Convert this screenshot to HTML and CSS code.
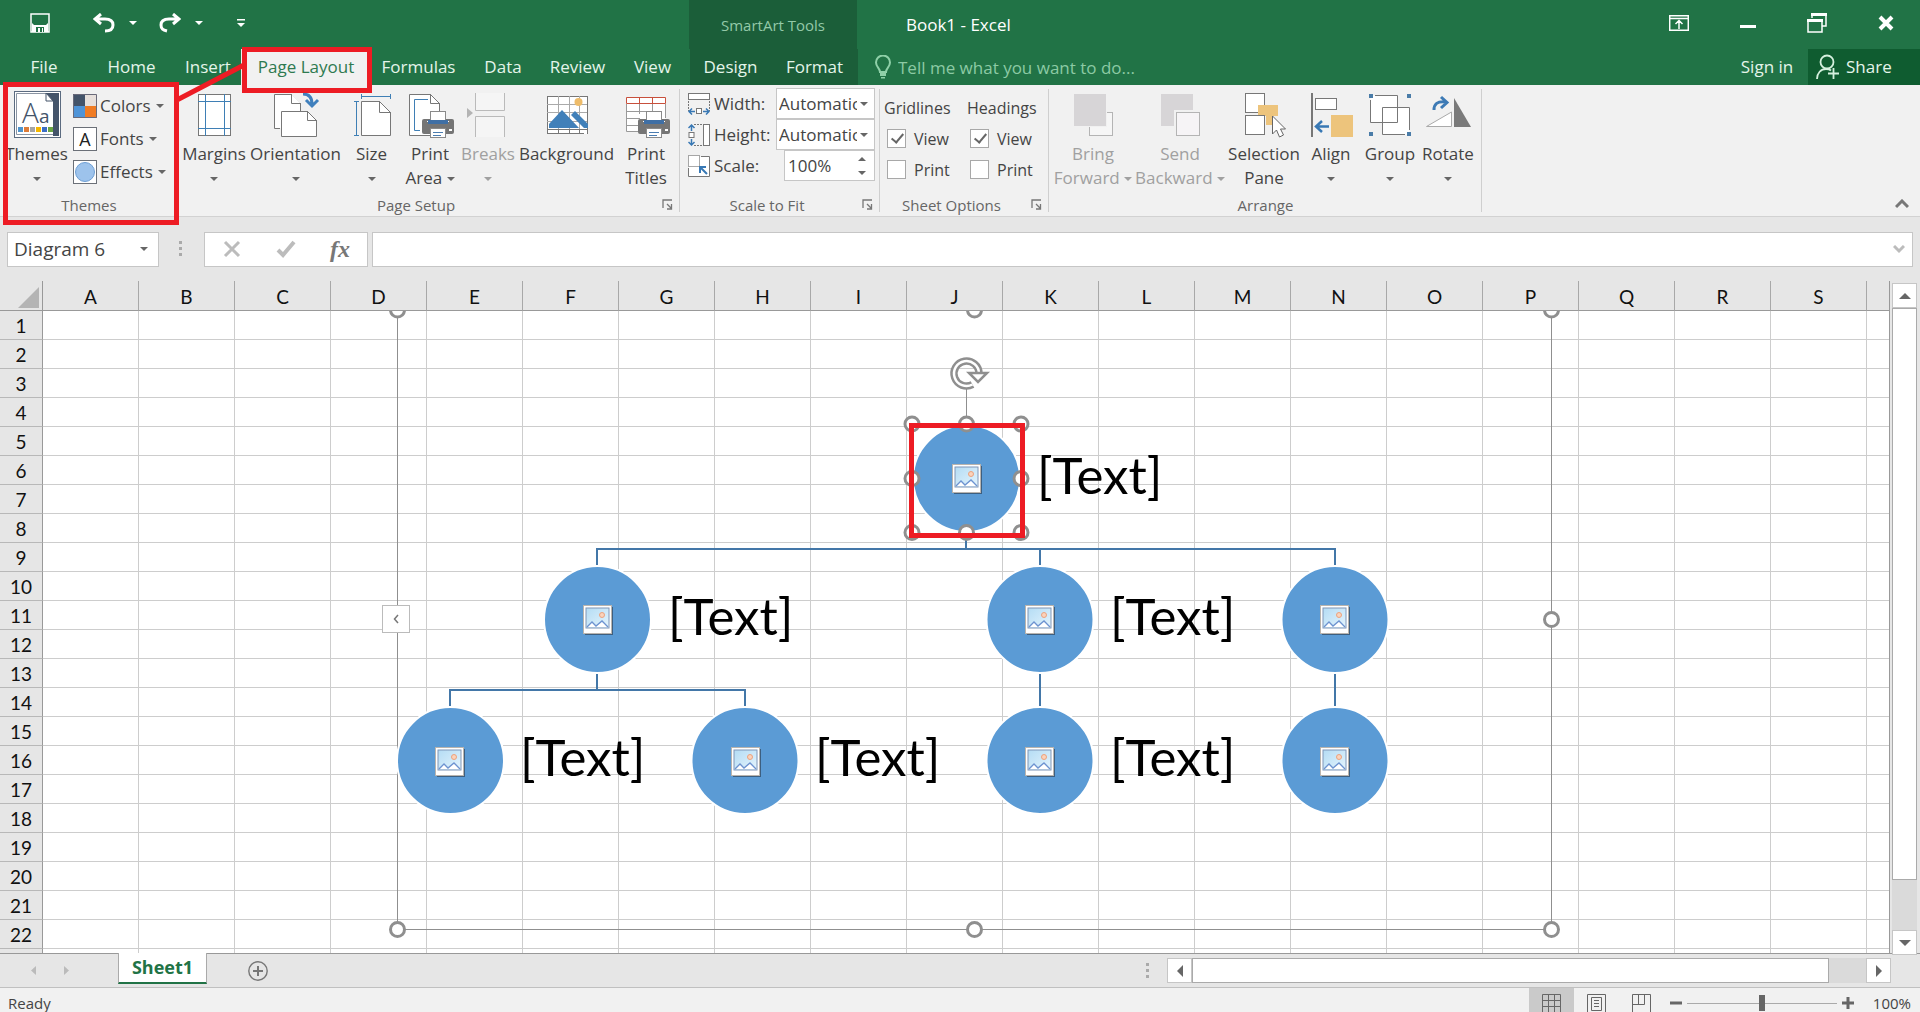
FILE: index.html
```html
<!DOCTYPE html>
<html lang="en">
<head>
<meta charset="utf-8">
<title>Book1 - Excel</title>
<link rel="stylesheet" href="styles.css">
</head>
<body>
<svg class="defs" aria-hidden="true">
  <defs>
    <linearGradient id="sky" x1="0" y1="0" x2="1" y2="1"><stop offset="0" stop-color="#b4dcf4"/><stop offset="1" stop-color="#e4f4fd"/></linearGradient>
    <symbol id="picture" viewBox="0 0 30 30">
      <rect x="2" y="2" width="28" height="28" fill="#3d5f80"/>
      <rect x="0.5" y="0.5" width="28" height="28" fill="#fff" stroke="#b9b4ae"/>
      <rect x="3" y="3" width="23" height="20" fill="url(#sky)" stroke="#7f96b8"/>
      <circle cx="19" cy="10" r="2.500" fill="#fbd3bb" stroke="#eba27e"/>
      <path d="M4 22l5-5 4 4 6-5 6 6z" fill="#fff"/>
      <path d="M4 22l5-5 4 4 6-5 6 6" fill="none" stroke="#6d93d0" stroke-width="1.300"/>
    </symbol>
    <symbol id="printer" viewBox="0 0 32 27">
      <rect x="0" y="8" width="32" height="15" rx="2" fill="#757575"/>
      <rect x="8.500" y="0.5" width="15" height="11" fill="#fff" stroke="#8a8a8a"/>
      <path d="M5 10.500h22" stroke="#fff"/>
      <rect x="6" y="9" width="20" height="4" fill="#3f6fa5"/>
      <rect x="8.500" y="17.500" width="15" height="9" fill="#fff" stroke="#8a8a8a"/>
      <path d="M11 21.500h10M11 24.500h8" stroke="#4a7cb0"/>
      <rect x="27" y="18" width="3" height="2" fill="#fff"/>
    </symbol>
    <symbol id="launcher" viewBox="0 0 11 11">
      <path d="M1 9V1h9M5 5l4 4M9.500 5v5H5" fill="none" stroke="#777" stroke-width="1.300"/>
    </symbol>
    <symbol id="caret" viewBox="0 0 8 4"><path d="M0 0h8L4 4z" fill="currentColor"/></symbol>
  </defs>
</svg>

<header class="titlebar">
  <div class="quick">
    <button class="bare save" aria-label="Save"><svg width="20" height="20" viewBox="0 0 20 20"><path d="M1 1h18v18H1z" fill="none" stroke="#fff" stroke-width="1.500"/><path d="M2 10l2 2h12l2-2v9H2z" fill="#fff"/><path d="M6 14h8v5H6z" fill="#217346"/><path d="M8 15h2v4H8zM12 15h1v4h-1z" fill="#fff"/></svg></button>
    <button class="bare undo" aria-label="Undo"><svg width="22" height="20" viewBox="0 0 22 20"><path d="M8 1L2 6l6 5M2 6h10c5 0 8 2 8 6s-3 6-8 6" fill="none" stroke="#fff" stroke-width="3"/></svg></button>
    <button class="bare drop" aria-label="Undo list"><svg width="8" height="4"><use href="#caret"/></svg></button>
    <button class="bare redo" aria-label="Redo"><svg width="22" height="20" viewBox="0 0 22 20"><path d="M14 1l6 5-6 5M20 6H10c-5 0-8 2-8 6s2 5 6 6" fill="none" stroke="#fff" stroke-width="3"/></svg></button>
    <button class="bare drop" aria-label="Redo list"><svg width="8" height="4"><use href="#caret"/></svg></button>
    <button class="bare custom" aria-label="Customize toolbar"><svg width="8" height="8" viewBox="0 0 8 8"><path d="M0 0h8v1.500H0zM0 4h8L4 8z" fill="#fff"/></svg></button>
  </div>
  <div class="context-title">SmartArt Tools</div>
  <div class="doc-title">Book1 - Excel</div>
  <div class="window-buttons">
    <button class="bare" aria-label="Ribbon display options"><svg width="20" height="16" viewBox="0 0 20 16"><path d="M.7.7h18.600v14.600H.7zM1 3.500h18M10 14V6M6.500 9L10 5.500 13.500 9" fill="none" stroke="#fff" stroke-width="1.500"/></svg></button>
    <button class="bare" aria-label="Minimize"><svg width="16" height="16" viewBox="0 0 16 16"><path d="M0 10h16v3H0z" fill="#fff"/></svg></button>
    <button class="bare" aria-label="Restore"><svg width="20" height="20" viewBox="0 0 20 20"><path d="M5 5V1.500h14V13h-4" fill="none" stroke="#fff" stroke-width="1.500"/><path d="M4 0h16v3H4zM0 6h16v3H0z" fill="#fff"/><path d="M1 7h14v12H1z" fill="none" stroke="#fff" stroke-width="1.500"/></svg></button>
    <button class="bare" aria-label="Close"><svg width="16" height="16" viewBox="0 0 16 16"><path d="M2 2l12 12M14 2L2 14" stroke="#fff" stroke-width="4"/></svg></button>
  </div>
</header>

<nav class="tabs">
  <button class="tab w-file">File</button>
  <button class="tab w-home">Home</button>
  <button class="tab w-insert">Insert</button>
  <button class="tab w-layout active">Page Layout</button>
  <button class="tab w-formulas">Formulas</button>
  <button class="tab w-data">Data</button>
  <button class="tab w-data">Review</button>
  <button class="tab w-data">View</button>
  <button class="tab w-design context">Design</button>
  <button class="tab w-home context">Format</button>
  <label class="tell-me">
    <svg width="16" height="24" viewBox="0 0 16 24"><path d="M5 17c0-4-4-5-4-9.500a7 7 0 0 1 14 0C15 12 11 13 11 17z" fill="none" stroke="#8fd0a8" stroke-width="2"/><path d="M5 18h6v3H5zM6 22h4v1.500H6z" fill="#8fd0a8"/></svg>
    <input type="text" placeholder="Tell me what you want to do..." aria-label="Tell me what you want to do">
  </label>
  <button class="tab sign-in">Sign in</button>
  <button class="share"><svg width="24" height="26" viewBox="0 0 24 26"><circle cx="11" cy="8" r="6.500" fill="none" stroke="#d5f0de" stroke-width="1.800"/><path d="M1 25c0-6 4-10 9-10 2 0 4 .5 5 1.500M17.500 14v11M12 19.500h11" fill="none" stroke="#d5f0de" stroke-width="1.800"/></svg>Share</button>
</nav>

<section class="ribbon">
  <div class="group g-themes">
    <div class="group-body">
      <button class="big b-themes">
        <svg class="icon" viewBox="0 0 48 47"><rect x="1.500" y=".5" width="46" height="46" fill="#fff" stroke="#5b6b80"/><path d="M3.500 2.500h30l7 7v34h-37z" fill="#fff" stroke="#8b95a3"/><path d="M33 2h13v43h-6V10z" fill="#44546a"/><path d="M33 2v8h7z" fill="#fff" stroke="#44546a"/><text x="9" y="32" font-size="28" fill="#44546a" class="light">A</text><text x="26" y="32" font-size="19" fill="#44546a">a</text><path d="M5 36h5v5H5z" fill="#4f94cd"/><path d="M11 36h5v5h-5z" fill="#dd7c38"/><path d="M17 36h5v5h-5z" fill="#a5a5a5"/><path d="M23 36h5v5h-5z" fill="#f5b800"/><path d="M29 36h5v5h-5z" fill="#3c6ec4"/><path d="M35 36h5v5h-5z" fill="#6aa544"/></svg>
        <span>Themes</span><span><svg class="caret"><use href="#caret"/></svg></span>
      </button>
      <div class="stack">
        <button class="small"><svg width="24" height="24" viewBox="0 0 24 24"><path d="M0 0h12v12H0z" fill="#44546a"/><path d="M12 0h12v12H12z" fill="#e7e0dc"/><path d="M0 12h12v12H0z" fill="#4f94d8"/><path d="M12 12h12v12H12z" fill="#f07c24"/><path d="M.5.5h23v23H.5z" fill="none" stroke="#6a6a7a"/></svg>Colors<svg class="caret"><use href="#caret"/></svg></button>
        <button class="small"><svg width="24" height="24" viewBox="0 0 24 24"><rect x=".5" y=".5" width="23" height="23" fill="#fff" stroke="#6b7078"/><text x="12" y="19" font-size="18" text-anchor="middle" fill="#222">A</text></svg>Fonts<svg class="caret"><use href="#caret"/></svg></button>
        <button class="small"><svg width="24" height="24" viewBox="0 0 24 24"><rect x=".5" y=".5" width="23" height="23" fill="#fff" stroke="#6b7078"/><circle cx="12" cy="12" r="9.500" fill="#9dc3ec" stroke="#6e9fd4"/></svg>Effects<svg class="caret"><use href="#caret"/></svg></button>
      </div>
    </div>
    <div class="group-foot"><span>Themes</span></div>
  </div>

  <div class="group g-setup">
    <div class="group-body">
      <button class="big b-margins">
        <svg class="icon" viewBox="0 0 48 47"><rect x="8.500" y="3.500" width="32" height="41" fill="#fff" stroke="#777"/><path d="M15.500 3v42M34.500 3v42M8 10.500h33M8 37.500h33" stroke="#3f7fb5" fill="none"/></svg>
        <span>Margins</span><span><svg class="caret"><use href="#caret"/></svg></span>
      </button>
      <button class="big b-orient">
        <svg class="icon" viewBox="0 0 48 47"><path d="M8 37.500H2.500v-34h17l9 9V20" fill="#fff" stroke="#777"/><path d="M19.500 3v9.500H29M9.500 20.500h26l9 9v16h-35z" fill="#fff" stroke="#777"/><path d="M35.500 20v9.500H45" fill="none" stroke="#777"/><path d="M31 3c6 0 9 3 9 10M34 9l6 6 6-6" fill="none" stroke="#4080bd" stroke-width="3"/></svg>
        <span>Orientation</span><span><svg class="caret"><use href="#caret"/></svg></span>
      </button>
      <button class="big b-size">
        <svg class="icon" viewBox="0 0 48 47"><path d="M13.500 10.500h18l11 11v23h-29z" fill="#fff" stroke="#777"/><path d="M31.500 10v11.500H43" fill="none" stroke="#777"/><path d="M13.500 3v5M42.500 3v5M13 5.500h30M6 10.500h5M6 44.500h5M8.500 10v35" fill="none" stroke="#3f7fb5"/></svg>
        <span>Size</span><span><svg class="caret"><use href="#caret"/></svg></span>
      </button>
      <button class="big b-area">
        <svg class="icon" viewBox="0 0 48 47"><path d="M3.500 3.500h21l9 9v32h-30z" fill="#fff" stroke="#777"/><path d="M24.500 3v9.500H34" fill="none" stroke="#777"/><path d="M22 8.500H8.500v31H14" fill="none" stroke="#3f7fb5"/><use href="#printer" x="16" y="20" width="32" height="27"/></svg>
        <span>Print</span><span>Area <svg class="caret"><use href="#caret"/></svg></span>
      </button>
      <button class="big b-breaks" disabled>
        <svg class="icon" viewBox="0 0 48 47"><path d="M3 17l6 5-6 5z" fill="#b4b4b4"/><path d="M11.500 2v17.500h29V2M11.500 46V25.500h29V46" fill="#f5f5f5" stroke="#bababa"/></svg>
        <span>Breaks</span><span><svg class="caret"><use href="#caret"/></svg></span>
      </button>
      <button class="big b-back">
        <svg class="icon" viewBox="0 0 48 47"><rect x="4.500" y="5.500" width="40" height="37" fill="#fff" stroke="#777"/><path d="M15.500 5v37M26.500 5v37M36.500 5v37M4 13.500h40M4 21.500h40M4 30.500h40" stroke="#aaa"/><circle cx="35.500" cy="11" r="4" fill="#eebc6a"/><path d="M6 37v-4l13-14 17 18zM28 24l4-4 13 13v4h-4z" fill="#4180b9"/><path d="M5 38h39v5H5z" fill="#fff"/><path d="M4 38.500h41M4 42.500h37M15.500 38v4M26.500 38v4M36.500 38v4" stroke="#777"/></svg>
        <span>Background</span>
      </button>
      <button class="big b-titles">
        <svg class="icon" viewBox="0 0 48 47"><rect x="4.500" y="6.500" width="39" height="34" fill="#fff"/><path d="M4.500 13v27.500H16M17.500 13v10M30.500 13v10M4 20.500h20M4 27.500h14M43.500 13v14M4 34.500h12" fill="none" stroke="#999"/><path d="M4.500 6.500h39v6h-39zM17.500 6v6M30.500 6v6" fill="none" stroke="#c8503c"/><use href="#printer" x="16" y="20" width="32" height="27"/></svg>
        <span>Print</span><span>Titles</span>
      </button>
    </div>
    <div class="group-foot"><span>Page Setup</span><button class="bare launch" aria-label="Page Setup options"><svg width="11" height="11"><use href="#launcher"/></svg></button></div>
  </div>

  <div class="group g-scale">
    <div class="group-body fields">
      <div class="field">
        <svg width="22" height="22" viewBox="0 0 22 22"><rect x=".5" y=".5" width="21" height="6" fill="#fff" stroke="#777"/><path d="M.5 8v10M21.500 8v10" stroke="#777" stroke-dasharray="2 1"/><rect x="8.500" y="15.500" width="5" height="5" fill="#fff" stroke="#777"/><path d="M1 18.500h6M4 15.500l-3 3 3 3M21 18.500h-6M18 15.500l3 3-3 3" fill="none" stroke="#3878b4" stroke-width="1.500"/></svg>
        <label for="width">Width:</label>
        <div class="select"><select id="width"><option>Automatic</option></select><svg class="caret"><use href="#caret"/></svg></div>
      </div>
      <div class="field">
        <svg width="22" height="22" viewBox="0 0 22 22"><rect x="15.500" y=".5" width="6" height="21" fill="#fff" stroke="#777"/><path d="M6 .5h8M6 21.500h8" stroke="#777" stroke-dasharray="2 1"/><rect x="1" y="8.500" width="5" height="5" fill="#fff" stroke="#777"/><path d="M3.500 1v6M.5 4l3-3 3 3M3.500 21v-6M.5 18l3 3 3-3" fill="none" stroke="#3878b4" stroke-width="1.500"/></svg>
        <label for="height">Height:</label>
        <div class="select"><select id="height"><option>Automatic</option></select><svg class="caret"><use href="#caret"/></svg></div>
      </div>
      <div class="field">
        <svg width="22" height="22" viewBox="0 0 22 22"><path d="M13 1.500h8.500v20H.5V13" fill="#fff" stroke="#777"/><rect x=".5" y=".5" width="11" height="11" fill="#fff" stroke="#555" stroke-dasharray="1 1"/><path d="M12 18v-6h6M12 12l7 7" fill="none" stroke="#3878b4" stroke-width="2"/></svg>
        <label for="scale">Scale:</label>
        <div class="spin"><input id="scale" type="text" value="100%"><svg width="8" height="18" viewBox="0 0 8 18"><path d="M0 4h8L4 0zM0 14h8l-4 4z" fill="#666"/></svg></div>
      </div>
    </div>
    <div class="group-foot"><span>Scale to Fit</span><button class="bare launch" aria-label="Scale to Fit options"><svg width="11" height="11"><use href="#launcher"/></svg></button></div>
  </div>

  <div class="group g-sheet">
    <div class="group-body">
      <fieldset class="checks c-grid"><legend>Gridlines</legend>
        <label><input type="checkbox" checked>View</label>
        <label><input type="checkbox">Print</label>
      </fieldset>
      <fieldset class="checks"><legend>Headings</legend>
        <label><input type="checkbox" checked>View</label>
        <label><input type="checkbox">Print</label>
      </fieldset>
    </div>
    <div class="group-foot"><span>Sheet Options</span><button class="bare launch" aria-label="Sheet options"><svg width="11" height="11"><use href="#launcher"/></svg></button></div>
  </div>

  <div class="group g-arrange">
    <div class="group-body">
      <button class="big b-forward" disabled>
        <svg class="icon" viewBox="0 0 48 47"><rect x="20.500" y="21.500" width="23" height="23" fill="#f6f6f6" stroke="#b4b4b4"/><path d="M4 2h34v34H4z" fill="#f1f1f1"/><path d="M5 3h32v32H5z" fill="#d7d5d7"/></svg>
        <span>Bring</span><span>Forward <svg class="caret"><use href="#caret"/></svg></span>
      </button>
      <button class="big b-backward" disabled>
        <svg class="icon" viewBox="0 0 48 47"><path d="M5 3h32v32H5z" fill="#d7d5d7"/><path d="M18 19h28v28H18z" fill="#f1f1f1"/><rect x="20.500" y="21.500" width="23" height="23" fill="#f6f4f6" stroke="#b4b4b4"/></svg>
        <span>Send</span><span>Backward <svg class="caret"><use href="#caret"/></svg></span>
      </button>
      <button class="big b-pane">
        <svg class="icon" viewBox="0 0 48 47"><rect x="5.500" y="2.500" width="19" height="19" fill="#fff" stroke="#777"/><path d="M18 14h20v11h-6v9h-6v-9h-8z" fill="#edc47c"/><rect x="5.500" y="24.500" width="19" height="19" fill="#fff" stroke="#777"/><path d="M32.500 25v18l4-4 3 7 4-2-3-6h5z" fill="#fff" stroke="#666"/></svg>
        <span>Selection</span><span>Pane</span>
      </button>
      <button class="big b-align">
        <svg class="icon" viewBox="0 0 48 47"><path d="M5 2v44" stroke="#777" stroke-width="2"/><rect x="8.500" y="7.500" width="21" height="11" fill="#fff" stroke="#777"/><path d="M24 24h22v22H24z" fill="#edc47c"/><path d="M22 35.500H10M15 30l-6 5.500 6 5.500" fill="none" stroke="#3878b4" stroke-width="2.500"/></svg>
        <span>Align</span><span><svg class="caret"><use href="#caret"/></svg></span>
      </button>
      <button class="big b-group">
        <svg class="icon" viewBox="0 0 48 47"><path d="M4.500 4.500h27v27h-27zM16.500 16.500h27v27h-27z" fill="#fff"/><path d="M9 4.500h22.500v27h-27V9M16.500 16.500h27V39M39 43.500H16.500v-27" fill="none" stroke="#777"/><path d="M3 3h4v4H3zM41 3h4v4h-4zM3 41h4v4H3zM41 41h4v4h-4z" fill="#4a7ca8"/></svg>
        <span>Group</span><span><svg class="caret"><use href="#caret"/></svg></span>
      </button>
      <button class="big b-rotate">
        <svg class="icon" viewBox="0 0 48 47"><path d="M2.500 35.500h25V21z" fill="#fff" stroke="#aaa"/><path d="M30 7v29h17z" fill="#7a7a7a"/><path d="M10 19c0-6 3-9 12-8M17 6l6 5.500-6 5.500" fill="none" stroke="#3d7ab5" stroke-width="3"/></svg>
        <span>Rotate</span><span><svg class="caret"><use href="#caret"/></svg></span>
      </button>
    </div>
    <div class="group-foot"><span>Arrange</span></div>
  </div>
  <button class="bare collapse" aria-label="Collapse the ribbon"><svg width="14" height="10" viewBox="0 0 14 10"><path d="M1 8l6-6 6 6" fill="none" stroke="#777" stroke-width="3"/></svg></button>
</section>

<section class="formula-row">
  <div class="name-box"><input type="text" value="Diagram 6" aria-label="Name box"><svg class="caret"><use href="#caret"/></svg></div>
  <svg class="grip" width="3" height="16" viewBox="0 0 3 16"><path d="M0 0h3v3H0zM0 6h3v3H0zM0 12h3v3H0z" fill="#aaa"/></svg>
  <div class="fx-box">
    <button class="bare" aria-label="Cancel"><svg width="18" height="18" viewBox="0 0 18 18"><path d="M2 2l14 14M16 2L2 16" stroke="#bcbcbc" stroke-width="3"/></svg></button>
    <button class="bare" aria-label="Enter"><svg width="20" height="18" viewBox="0 0 20 18"><path d="M2 10l5 5L18 2" fill="none" stroke="#bcbcbc" stroke-width="4"/></svg></button>
    <button class="bare fx">fx</button>
  </div>
  <div class="formula"><input type="text" aria-label="Formula bar"><svg width="12" height="9" viewBox="0 0 12 9"><path d="M1 1l5 5 5-5" fill="none" stroke="#bcbcbc" stroke-width="3"/></svg></div>
</section>

<main class="work">
  <div class="sheet">
    <table class="cells"><thead><tr id="columns"></tr></thead><tbody id="rows"></tbody></table>
    <div class="canvas">
      <svg width="1846" height="643" viewBox="43 311 1846 643">
        <g fill="none" stroke="#8f8f8f"><path d="M397.500 311v618.500H1551.500V311"/><path d="M966.500 388v37"/></g>
        <g fill="none" stroke="#4377a8" stroke-width="2"><path d="M966 531v18M597 565v-16h738v16M1040 549v16M597 674v16M450 706v-16h295v16M1040 674v32M1335 674v32"/></g>
        <g fill="#5b9bd5" stroke="#fff" stroke-width="2">
          <circle cx="966.500" cy="478.500" r="53.500"/><circle cx="597.500" cy="619.500" r="53.500"/><circle cx="1040" cy="619.500" r="53.500"/><circle cx="1335" cy="619.500" r="53.500"/>
          <circle cx="450.500" cy="760.500" r="53.500"/><circle cx="745" cy="760.500" r="53.500"/><circle cx="1040" cy="760.500" r="53.500"/><circle cx="1335" cy="760.500" r="53.500"/>
        </g>
        <g>
          <use href="#picture" x="952" y="464" width="30" height="30"/><use href="#picture" x="583" y="605" width="30" height="30"/><use href="#picture" x="1025" y="605" width="30" height="30"/><use href="#picture" x="1320" y="605" width="30" height="30"/>
          <use href="#picture" x="435" y="747" width="30" height="30"/><use href="#picture" x="731" y="747" width="30" height="30"/><use href="#picture" x="1025" y="747" width="30" height="30"/><use href="#picture" x="1320" y="747" width="30" height="30"/>
        </g>
        <g class="node-text">
          <text x="1037" y="494">[Text]</text><text x="668" y="635">[Text]</text><text x="1110" y="635">[Text]</text>
          <text x="520" y="776">[Text]</text><text x="815" y="776">[Text]</text><text x="1110" y="776">[Text]</text>
        </g>
        <g fill="#fff" stroke="#8f8f8f" stroke-width="3">
          <circle cx="397.500" cy="310" r="7"/><circle cx="974.500" cy="310" r="7"/><circle cx="1551.500" cy="310" r="7"/><circle cx="1551.500" cy="619.500" r="7"/><circle cx="397.500" cy="929.500" r="7"/><circle cx="974.500" cy="929.500" r="7"/><circle cx="1551.500" cy="929.500" r="7"/>
          <circle cx="912" cy="424" r="7"/><circle cx="966.500" cy="424" r="7"/><circle cx="1021" cy="424" r="7"/><circle cx="912" cy="478.500" r="7"/><circle cx="1021" cy="478.500" r="7"/><circle cx="912" cy="532.500" r="7"/><circle cx="966.500" cy="532.500" r="7"/><circle cx="1021" cy="532.500" r="7"/>
        </g>
        <path d="M979 373.500a12.500 12.500 0 1 0-6.500 11" fill="none" stroke="#8f8f8f" stroke-width="7.500"/>
        <path d="M979 373.500a12.500 12.500 0 1 0-6.500 11" fill="none" stroke="#fff" stroke-width="2.500"/>
        <path d="M969 373h18l-9 9z" fill="#fff" stroke="#8f8f8f" stroke-width="2.500"/>
        <rect x="911.500" y="425.500" width="111" height="110" fill="none" stroke="#ed1c24" stroke-width="5"/>
      </svg>
      <button class="pane-toggle" aria-label="Show text pane"><svg width="6" height="10" viewBox="0 0 6 10"><path d="M5 1L1.500 5 5 9" fill="none" stroke="#777" stroke-width="1.500"/></svg></button>
    </div>
  </div>
  <div class="vscroll">
    <button class="sb" aria-label="Scroll up"><svg width="12" height="6" viewBox="0 0 12 6"><path d="M0 6h12L6 0z" fill="#666"/></svg></button>
    <div class="track"><div class="thumb"></div></div>
    <button class="sb" aria-label="Scroll down"><svg width="12" height="6" viewBox="0 0 12 6"><path d="M0 0h12L6 6z" fill="#666"/></svg></button>
  </div>
</main>

<section class="sheet-bar">
  <div class="sheet-nav">
    <button class="bare" aria-label="Previous sheet"><svg width="5" height="9" viewBox="0 0 5 9"><path d="M5 0v9L0 4.500z" fill="#bbb"/></svg></button>
    <button class="bare" aria-label="Next sheet"><svg width="5" height="9" viewBox="0 0 5 9"><path d="M0 0v9l5-4.500z" fill="#bbb"/></svg></button>
  </div>
  <button class="sheet-tab">Sheet1</button>
  <button class="bare add" aria-label="New sheet"><svg width="20" height="20" viewBox="0 0 20 20"><circle cx="10" cy="10" r="9.200" fill="none" stroke="#777" stroke-width="1.400"/><path d="M10 5v10M5 10h10" stroke="#777" stroke-width="2"/></svg></button>
  <svg class="grip" width="3" height="16" viewBox="0 0 3 16"><path d="M0 0h3v3H0zM0 6h3v3H0zM0 12h3v3H0z" fill="#aaa"/></svg>
  <div class="hscroll">
    <button class="sb" aria-label="Scroll left"><svg width="6" height="12" viewBox="0 0 6 12"><path d="M6 0v12L0 6z" fill="#666"/></svg></button>
    <div class="htrack"><div class="hthumb"></div></div>
    <button class="sb" aria-label="Scroll right"><svg width="6" height="12" viewBox="0 0 6 12"><path d="M0 0v12l6-6z" fill="#666"/></svg></button>
  </div>
</section>

<footer class="status">
  <span class="ready">Ready</span>
  <button class="view on" aria-label="Normal view"><svg width="19" height="19" viewBox="0 0 19 19"><path d="M.5.500h18v18H.5zM6.500 0v19M12.500 0v19M0 6.500h19M0 12.500h19" fill="none" stroke="#666"/></svg></button>
  <button class="view" aria-label="Page layout view"><svg width="19" height="19" viewBox="0 0 19 19"><path d="M.5.500h18v18H.5zM4.500 3.500h10v13h-10zM7 6.500h5M7 9.500h5M7 12.500h5" fill="none" stroke="#666"/></svg></button>
  <button class="view" aria-label="Page break view"><svg width="19" height="19" viewBox="0 0 19 19"><path d="M.5.500h18v18H.5zM.5 10.500h12V0M6.500 0v10" fill="none" stroke="#666"/></svg></button>
  <button class="bare zoom-btn" aria-label="Zoom out"><svg width="12" height="12" viewBox="0 0 12 12"><path d="M0 4.500h12v3H0z" fill="#666"/></svg></button>
  <input class="zoom" type="range" min="0" max="100" value="50" aria-label="Zoom">
  <button class="bare zoom-btn" aria-label="Zoom in"><svg width="12" height="12" viewBox="0 0 12 12"><path d="M0 4.500h12v3H0zM4.500 0h3v12h-3z" fill="#666"/></svg></button>
  <span class="percent">100%</span>
</footer>

<svg class="marks" width="380" height="230" viewBox="0 0 380 230" aria-hidden="true"><g fill="none" stroke="#ed1c24" stroke-width="5"><path d="M5.500 84.500h171v138H5.500zM244.500 49.500h125v41h-125zM175 101l69-36"/></g></svg>
<script src="script.js"></script>
</body>
</html>
```
FILE: styles.css
```css
* { box-sizing: border-box; }
body {
  margin: 0;
  height: 100vh;
  display: flex;
  flex-direction: column;
  overflow: hidden;
  position: relative;
  background: #e6e6e6;
  color: #444;
  font-family: "Open Sans", "Noto Sans", sans-serif;
  font-size: 17px;
  line-height: 24px;
}
button, input, select { font: inherit; color: inherit; padding: 0; border: 0; background: none; margin: 0; border-radius: 0; }
svg { display: block; flex: none; }
.defs { position: absolute; width: 0; height: 0; }
.bare { display: flex; align-items: center; justify-content: center; }
.caret { display: inline-block; width: 8px; height: 4px; color: #666; vertical-align: middle; }

/* Title bar */
.titlebar { flex: none; height: 49px; display: flex; background: #217346; color: #fff; }
.quick { width: 689px; height: 46px; display: flex; align-items: center; padding-left: 30px; color: #fff; }
.save { width: 20px; margin-right: 43px; }
.undo, .redo { width: 22px; margin-right: 14px; }
.drop { width: 8px; margin-right: 22px; }
.custom { width: 8px; margin-left: 12px; }
.context-title { width: 168px; background: #1b5e39; color: #93c9a8; text-align: center; font-size: 15px; line-height: 50px; }
.doc-title { flex: 1; padding-left: 49px; line-height: 50px; }
.window-buttons { height: 46px; display: flex; align-items: center; }
.window-buttons .bare { width: 69px; }

/* Tabs */
.tabs { flex: none; height: 36px; display: flex; background: #217346; color: #e4f5ea; }
.tab { text-align: center; line-height: 36px; white-space: nowrap; }
.w-file { width: 88px; }
.w-home { width: 87px; }
.w-insert { width: 66px; }
.w-layout { width: 130px; }
.w-formulas { width: 95px; }
.w-data { width: 74px; }
.w-data + .w-data { width: 75px; }
.w-design { width: 81px; }
.active { background: #f1f1f1; color: #2e7a50; }
.context { background: #1b5e39; }
.tell-me { flex: 1; display: flex; align-items: center; gap: 7px; padding-left: 17px; }
.tell-me input { flex: 1; min-width: 0; height: 36px; outline: none; }
.tell-me input::placeholder { color: #8ccaa4; opacity: 1; }
.sign-in { width: 82px; }
.share { width: 112px; display: flex; align-items: center; gap: 6px; padding-left: 8px; background: #0f5c30; }

/* Ribbon */
.ribbon { flex: none; height: 132px; display: flex; background: #f1f1f1; border-bottom: 1px solid #d2d2d2; }
.group { display: flex; flex-direction: column; position: relative; }
.group::after { content: ""; position: absolute; right: 0; top: 4px; bottom: 4px; width: 1px; background: #cfcfcf; }
.g-themes { width: 178px; }
.g-setup { width: 502px; }
.g-scale { width: 200px; }
.g-sheet { width: 169px; }
.g-arrange { width: 433px; }
.group-body { flex: 1; display: flex; align-items: flex-start; }
.group-foot { height: 23px; display: flex; align-items: center; font-size: 15px; color: #666; }
.group-foot span { flex: 1; text-align: center; }
.launch { width: 26px; height: 24px; }
.big { display: flex; flex-direction: column; align-items: center; padding-top: 6px; white-space: nowrap; }
.big span { line-height: 24px; height: 24px; color: #444; }
.big .icon { width: 48px; height: 47px; margin-bottom: 4px; }
.big:disabled span, .big:disabled .caret { color: #a0a0a0; }
.light { font-weight: 300; }
.b-themes { width: 73px; }
.b-margins { width: 72px; }
.b-orient { width: 91px; }
.b-size { width: 61px; }
.b-area { width: 56px; }
.b-breaks { width: 60px; }
.b-back { width: 97px; }
.b-titles { width: 62px; }
.b-forward { width: 88px; }
.b-backward { width: 86px; }
.b-pane { width: 82px; }
.b-align { width: 52px; }
.b-group { width: 66px; }
.b-rotate { width: 50px; }
.stack { padding-top: 4px; }
.small { height: 33px; display: flex; align-items: center; gap: 3px; white-space: nowrap; }
.small .caret { margin-left: 2px; }
.fields { flex-direction: column; padding: 3px 5px 0 8px; }
.field { display: flex; align-items: center; width: 100%; height: 31px; }
.field label { flex: 1; padding-left: 4px; white-space: nowrap; }
.select, .spin { width: 99px; height: 31px; display: flex; align-items: center; background: #fff; border: 1px solid #c6c6c6; padding-right: 4px; }
.select select { appearance: none; width: 80px; height: 28px; margin-right: 3px; padding-left: 2px; outline: none; overflow: hidden; text-overflow: clip; }
.spin { width: 91px; justify-content: space-between; padding-right: 8px; }
.spin input { width: 60px; height: 28px; padding-left: 3px; outline: none; }
.checks { border: 0; margin: 0; padding: 11px 0 0 4px; min-width: 0; width: 83px; font-size: 16px; }
.checks legend { padding: 0; float: left; width: 100%; line-height: 24px; margin-bottom: 3px; }
.checks label { clear: both; display: flex; align-items: center; gap: 8px; height: 31px; padding-left: 3px; }
.checks input { appearance: none; width: 19px; height: 19px; background: #fff; border: 1px solid #a8a8a8; position: relative; }
.checks input:checked::after { content: ""; position: absolute; left: 6px; top: 1px; width: 5px; height: 10px; border: solid #666; border-width: 0 2px 2px 0; transform: rotate(40deg); }
.collapse { margin: auto 11px 3px auto; height: 18px; }

/* Formula bar */
.formula-row { flex: none; display: flex; align-items: center; height: 64px; padding: 0 7px; }
.name-box, .fx-box, .formula { height: 35px; background: #fff; border: 1px solid #c6c6c6; display: flex; align-items: center; }
.name-box { width: 152px; padding: 0 10px 0 6px; font-size: 19px; }
.name-box input { flex: 1; min-width: 0; outline: none; }
.formula-row .grip { margin: 0 22px 0 20px; }
.fx-box { width: 164px; margin-right: 4px; justify-content: space-around; }
.fx-box .bare { width: 44px; height: 32px; }
.fx { font-family: "Liberation Serif", serif; font-style: italic; font-weight: bold; font-size: 24px; color: #777; }
.formula { flex: 1; padding-right: 7px; }
.formula input { flex: 1; height: 32px; outline: none; }

/* Worksheet */
.work { flex: 1; min-height: 0; display: flex; }
.sheet { flex: 1; min-width: 0; position: relative; overflow: hidden; border-right: 1px solid #999; }
.cells { table-layout: fixed; width: 1963px; border-collapse: separate; border-spacing: 0; font-family: Lato, sans-serif; font-size: 19px; color: #111; }
.cells th { height: 30px; width: 96px; padding: 2px 0 0; font-weight: 400; line-height: 26px; background: #e6e6e6; border-right: 1px solid #a8a8a8; border-bottom: 1px solid #999; }
.cells th:first-child { width: 43px; border-right-color: #999; }
.cells tbody th { height: 29px; border-bottom-color: #b8b8b8; }
.cells td { height: 29px; padding: 0; background: #fff; border-right: 1px solid #cdcdcd; border-bottom: 1px solid #cdcdcd; }
.corner svg { margin: 2px 0 0 18px; }
.canvas { position: absolute; left: 43px; top: 30px; right: 0; bottom: 0; overflow: hidden; }
.node-text { font-family: Lato, sans-serif; font-size: 51px; fill: #000; }
.pane-toggle { position: absolute; left: 339px; top: 294px; width: 28px; height: 28px; background: #fff; border: 1px solid #bbb; display: flex; align-items: center; justify-content: center; }
.vscroll { width: 30px; display: flex; flex-direction: column; padding: 2px 3px 0 2px; margin-bottom: -2px; position: relative; }
.sb { flex: none; width: 25px; height: 25px; background: #fff; border: 1px solid #c6c6c6; display: flex; align-items: center; justify-content: center; }
.track { flex: 1; background: #dadada; }
.thumb { height: 92%; background: #fff; border: 1px solid #aaa; }

/* Sheet tabs */
.sheet-bar { flex: none; height: 34px; display: flex; align-items: center; border-top: 1px solid #999; padding-right: 29px; }
.sheet-nav { width: 118px; display: flex; gap: 28px; padding-left: 31px; }
.sheet-tab { align-self: flex-start; width: 89px; height: 31px; margin-top: -1px; background: #fff; border: solid #aaa; border-width: 0 1px; border-bottom: 2px solid #217346; color: #217346; font-weight: 700; font-size: 18px; line-height: 29px; }
.add { width: 20px; margin: 1px auto 0 41px; }
.hscroll { width: 724px; display: flex; margin-left: 18px; }
.htrack { flex: 1; background: #dadada; }
.hthumb { width: 94.5%; height: 25px; background: #fff; border: 1px solid #aaa; }

/* Status bar */
.status { flex: none; height: 25px; display: flex; background: #f1f1f1; border-top: 1px solid #c0c0c0; padding: 0 9px 0 8px; font-size: 15px; overflow: hidden; }
.status span { line-height: 30px; }
.ready { flex: 1; }
.view { width: 45px; display: flex; justify-content: center; padding-top: 6px; }
.on { background: #cacaca; }
.zoom-btn { width: 12px; height: 30px; margin: 0 5px; }
.view + .zoom-btn { margin-left: 6px; }
.zoom { appearance: none; width: 150px; height: 30px; outline: none; background: linear-gradient(#aaa, #aaa) center / 100% 1px no-repeat; }
.zoom::-webkit-slider-thumb { appearance: none; width: 6px; height: 16px; background: #666; }
.percent { width: 52px; text-align: right; }
.marks { position: absolute; left: 0; top: 0; pointer-events: none; }
```
FILE: script.js
```js
const letters = "ABCDEFGHIJKLMNOPQRS".split("").concat("");
document.getElementById("columns").innerHTML =
  '<th class="corner"><svg width="21" height="21" viewBox="0 0 21 21"><path d="M21 0v21H0z" fill="#b4b4b4"/></svg></th>' +
  letters.map((name) => `<th scope="col">${name}</th>`).join("");

const rows = [];
for (let n = 1; n <= 23; n += 1) {
  const label = n < 23 ? n : "";
  rows.push(`<tr><th scope="row">${label}</th>${"<td></td>".repeat(letters.length)}</tr>`);
}
document.getElementById("rows").innerHTML = rows.join("");
```
